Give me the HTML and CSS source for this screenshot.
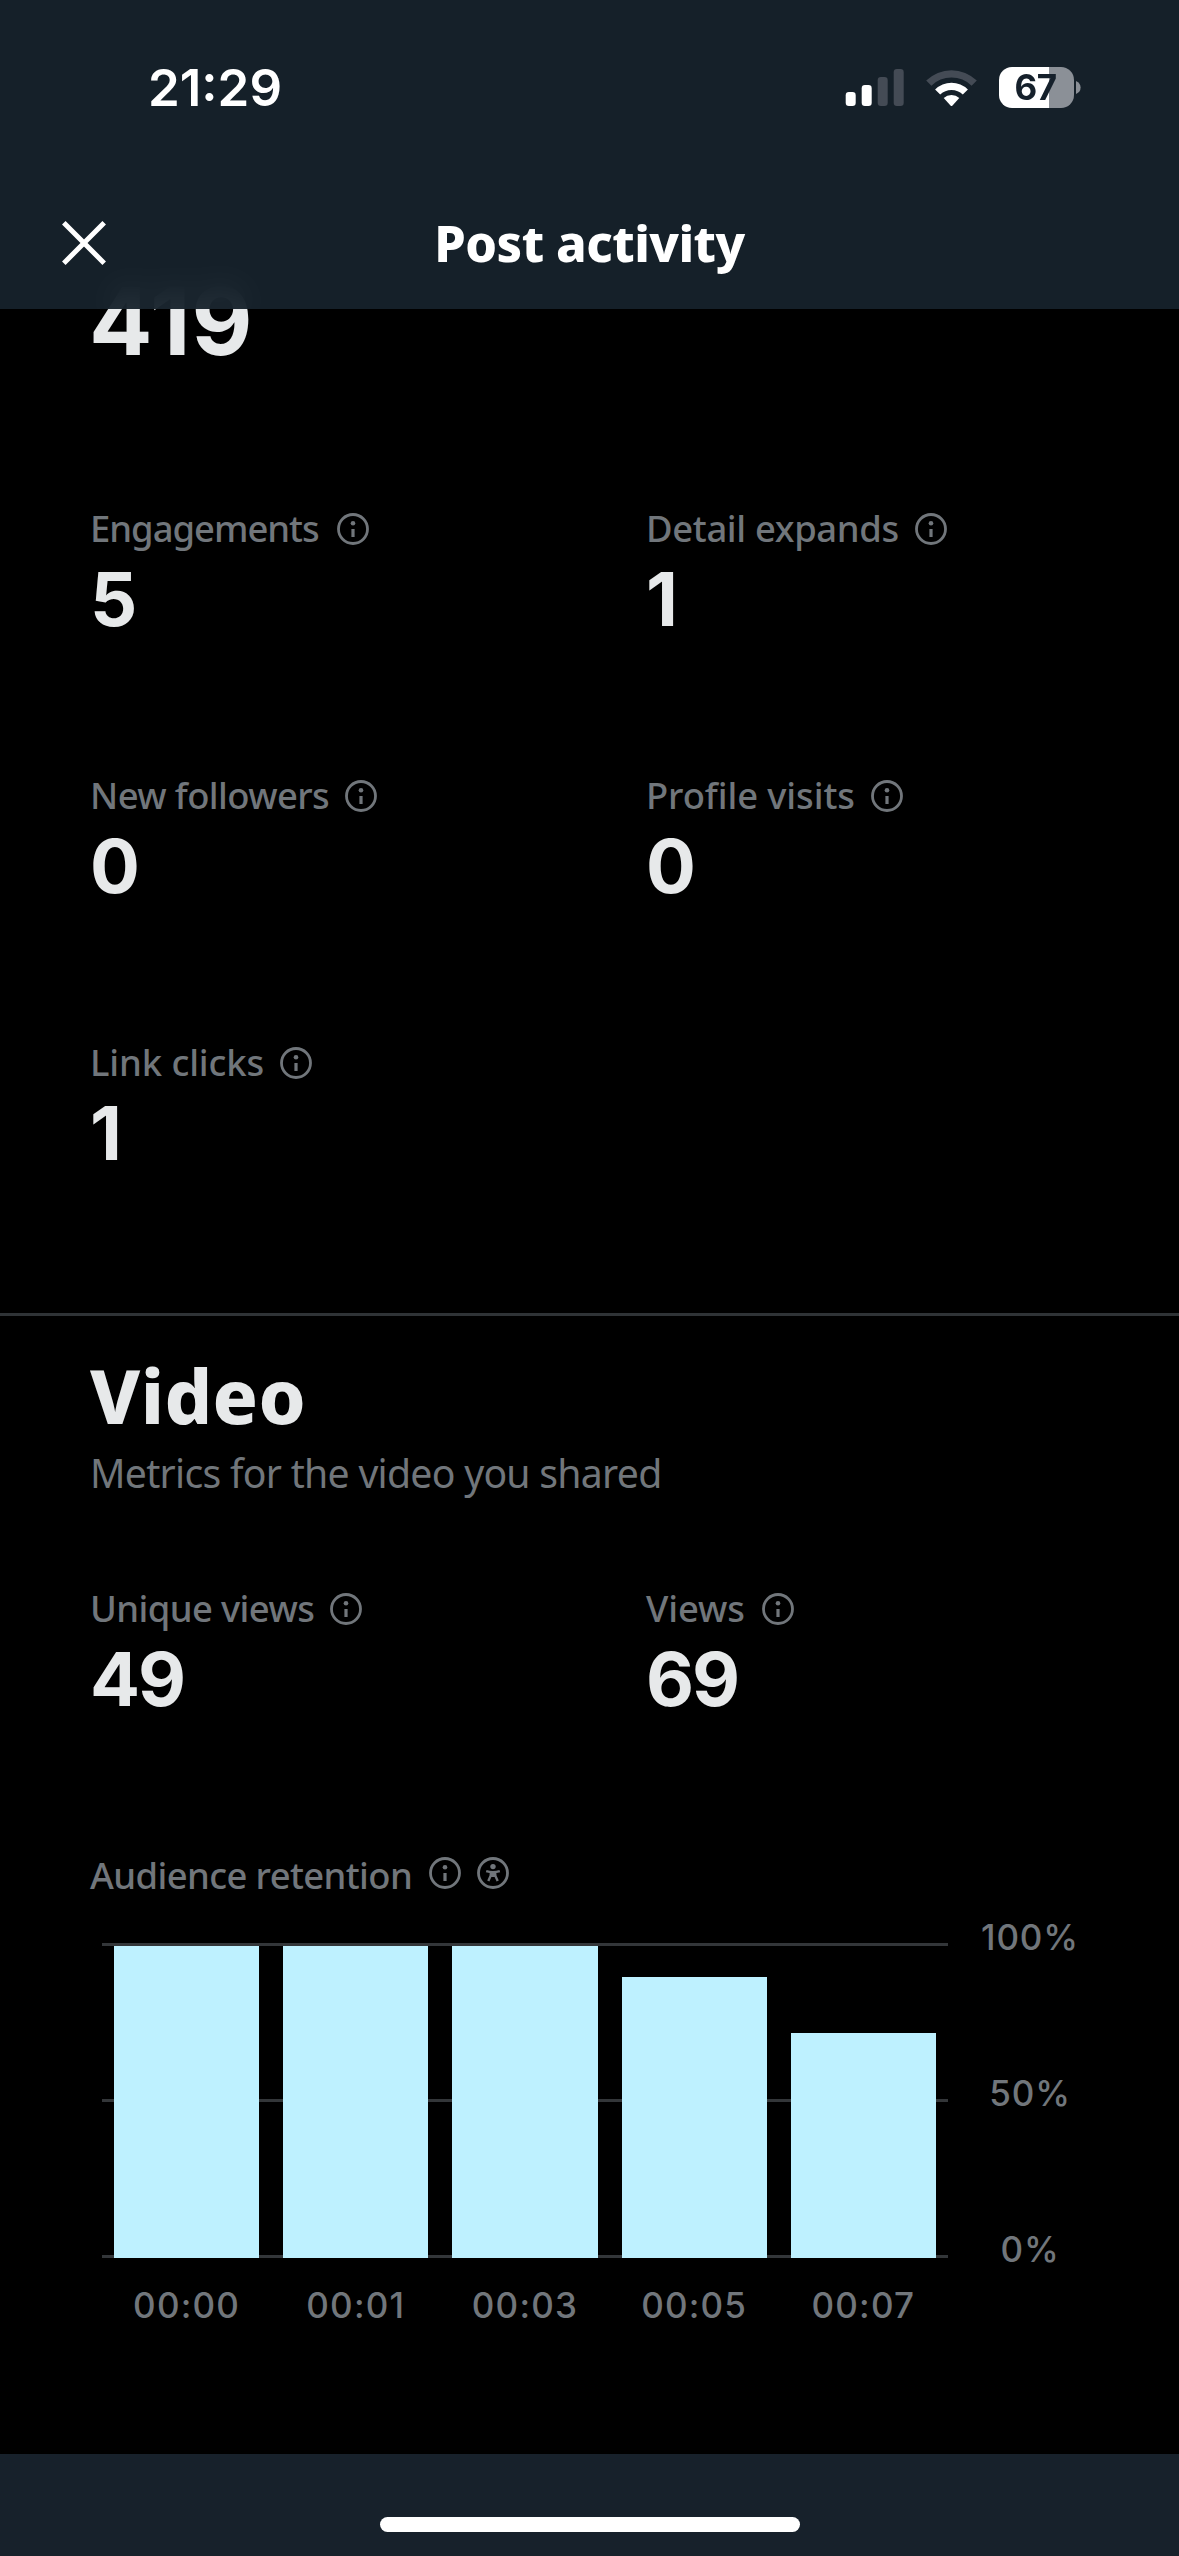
FILE: index.html
```html
<!DOCTYPE html>
<html lang="en">
<head>
<meta charset="utf-8">
<title>Post activity</title>
<link rel="stylesheet" href="styles.css">
</head>
<body>
<svg class="defs" aria-hidden="true">
  <symbol id="info" viewBox="0 0 32 32">
    <circle cx="16" cy="16" r="14.5" fill="none" stroke="currentColor" stroke-width="2.8"/>
    <circle cx="16" cy="10.3" r="2.3" fill="currentColor"/>
    <rect x="14.4" y="16" width="3.2" height="8" fill="currentColor"/>
  </symbol>
  <symbol id="person" viewBox="0 0 32 32">
    <circle cx="16" cy="16" r="14.5" fill="none" stroke="currentColor" stroke-width="2.8"/>
    <circle cx="16" cy="9.6" r="2.7" fill="currentColor"/>
    <path d="M9.2 14.1c4.3 1.3 9.3 1.3 13.6 0M13.8 15v3.6L11.3 24M18.2 15v3.6l2.5 5.4M13 18.8h6" fill="none" stroke="currentColor" stroke-width="2.4"/>
    <path d="M12.9 14.5h6.2v5.2h-6.2z" fill="currentColor"/>
  </symbol>
</svg>

<div class="screen">
  <header class="header">
    <div class="status">
      <span class="time">21:29</span>
      <div class="indicators">
        <svg class="signal" width="59" height="37" viewBox="0 0 59 37">
          <rect x="0.7" y="23" width="10" height="14" rx="3.2" fill="#fff"/>
          <rect x="16.7" y="16" width="10" height="21" rx="3.2" fill="#fff"/>
          <rect x="32.7" y="8" width="10" height="29" rx="3.2" fill="#444b55"/>
          <rect x="48.7" y="0" width="10" height="37" rx="3.2" fill="#444b55"/>
        </svg>
        <svg class="wifi" width="51" height="38" viewBox="0 0 51 38">
          <path d="M.2 11.6a36 36 0 0 1 50.6 0l-5.2 5.1a28.6 28.6 0 0 0-40.2 0z" fill="#444b55"/>
          <path d="M9.1 20.5a23.4 23.4 0 0 1 32.8 0l-5.1 5.1a16.4 16.4 0 0 0-22.6 0z" fill="#fff"/>
          <path d="M17.7 29.1a11.4 11.4 0 0 1 15.6 0l-6.8 7.4q-1 1-2 0z" fill="#fff"/>
        </svg>
        <div class="power">
          <span class="battery">67</span>
          <svg width="5" height="13" viewBox="0 0 5 13"><path d="M0 0q4.6 2 4.6 6.5T0 13z" fill="#8b9097"/></svg>
        </div>
      </div>
    </div>
    <div class="titlebar">
      <svg class="close" width="44" height="44" viewBox="0 0 44 44"><path d="M1.8 1.8l40.4 40.4M42.2 1.8L1.8 42.2" stroke="#fff" stroke-width="5"/></svg>
      <h1 class="title">Post activity</h1>
    </div>
  </header>

  <main class="content">
    <div class="total">419</div>
    <section class="metrics">
      <div class="metric"><div class="label tight">Engagements<svg class="icon"><use href="#info"/></svg></div><div class="value">5</div></div>
      <div class="metric"><div class="label mid">Detail expands<svg class="icon"><use href="#info"/></svg></div><div class="value">1</div></div>
      <div class="metric"><div class="label snug">New followers<svg class="icon"><use href="#info"/></svg></div><div class="value">0</div></div>
      <div class="metric"><div class="label">Profile visits<svg class="icon"><use href="#info"/></svg></div><div class="value">0</div></div>
      <div class="metric"><div class="label">Link clicks<svg class="icon"><use href="#info"/></svg></div><div class="value">1</div></div>
    </section>

    <section class="video">
      <h2 class="heading">Video</h2>
      <p class="sub">Metrics for the video you shared</p>
      <div class="metrics">
        <div class="metric"><div class="label snug">Unique views<svg class="icon"><use href="#info"/></svg></div><div class="value">49</div></div>
        <div class="metric"><div class="label views">Views<svg class="icon"><use href="#info"/></svg></div><div class="value">69</div></div>
      </div>
      <div class="label snug retention">Audience retention<svg class="icon"><use href="#info"/></svg><svg class="icon"><use href="#person"/></svg></div>
      <div class="chart">
        <div class="plot">
          <div class="bar" style="height:312px"></div>
          <div class="bar" style="height:312px"></div>
          <div class="bar" style="height:312px"></div>
          <div class="bar" style="height:281px"></div>
          <div class="bar" style="height:225px"></div>
        </div>
        <div class="y-axis"><span>100%</span><span>50%</span><span>0%</span></div>
        <div class="x-axis"><span>00:00</span><span>00:01</span><span>00:03</span><span>00:05</span><span>00:07</span></div>
      </div>
    </section>
  </main>

  <footer class="footer"><div class="home"></div></footer>
</div>
</body>
</html>
```
FILE: styles.css
```css
* { box-sizing: border-box; }

body {
  margin: 0;
  background: #000;
  font-family: "Noto Sans", "Open Sans", sans-serif;
  color: #e7e9ea;
}

.defs { display: none; }

.screen {
  display: flex;
  flex-direction: column;
  width: 1179px;
  height: 2556px;
  overflow: hidden;
}

.header {
  position: relative;
  z-index: 1;
  flex: none;
  height: 309px;
  background: rgba(23, 34, 44, 0.93);
  backdrop-filter: blur(16px);
  color: #fff;
}

.status {
  display: flex;
  align-items: center;
  justify-content: space-between;
  height: 175px;
  padding: 0 98px 0 148px;
}

.time {
  font: 600 51px/60px Inter, sans-serif;
}

.indicators, .power { display: flex; align-items: center; }
.indicators { gap: 22px; }
.power { gap: 2px; }

.battery {
  width: 75px;
  height: 41px;
  padding-right: 2px;
  border-radius: 13px;
  background: linear-gradient(90deg, #fff 50px, #8b9097 50px);
  color: #15202b;
  font: 700 35px/41px Inter, sans-serif;
  letter-spacing: -0.6px;
  text-align: center;
}

.titlebar {
  display: grid;
  grid-template-columns: 1fr auto 1fr;
  align-items: center;
  height: 134px;
  padding: 0 62px;
}

.close { margin-top: 2px; }

.title {
  margin: 2px 0 0;
  font-size: 50.4px;
  font-weight: 800;
  line-height: 60px;
  letter-spacing: -0.55px;
}

.content { flex: 1; margin-top: -35px; min-height: 0; }

.total {
  padding-left: 89px;
  font: 700 94px/94px Inter, sans-serif;
  letter-spacing: 1px;
}

.metrics {
  display: grid;
  grid-template-columns: 556px 1fr;
  grid-auto-rows: 267px;
}

.content > .metrics { margin-top: 134px; padding-left: 90px; }

.label {
  display: flex;
  align-items: center;
  height: 50px;
  padding-top: 2px;
  color: #71767b;
  font-size: 36.4px;
  font-weight: 500;
  line-height: 50px;
  letter-spacing: -0.1px;
}

.mid { letter-spacing: -0.35px; }
.snug { letter-spacing: -0.6px; }
.tight { letter-spacing: -1px; }

.icon { width: 32px; height: 32px; margin: 2px 0 0 16px; }
.tight .icon { margin-left: 18px; }
.views .icon { margin-left: 17px; }

.value {
  margin-top: 10px;
  font: 700 74px/74px Inter, sans-serif;
  letter-spacing: -2px;
}

.video {
  margin-top: 10px;
  padding: 37px 70px 0 90px;
  border-top: 3px solid #2f3336;
}

.heading {
  margin: 0;
  font-size: 75px;
  font-weight: 800;
  line-height: 84px;
  letter-spacing: 0.4px;
}

.sub {
  margin: 11px 0 84px;
  color: #71767b;
  font-size: 39.2px;
  line-height: 50px;
  letter-spacing: -0.73px;
}

.retention .icon { margin: -4px 0 0 17px; }
.retention .icon + .icon { margin-left: 16px; }

.chart {
  display: grid;
  grid-template-columns: 846px 161px;
  margin: 44px 0 0 12px;
  color: #71767b;
  font: 500 35px/50px Inter, sans-serif;
}

/* Gridlines at 100%, 50% and 0% */
.plot {
  display: grid;
  grid-template-columns: repeat(5, 1fr);
  align-items: end;
  height: 315px;
  background: repeating-linear-gradient(#333639 0 3px, transparent 3px 156px);
}

.bar { margin: 0 12px; background: #bef1ff; }

.y-axis {
  display: flex;
  flex-direction: column;
  gap: 106px;
  height: 315px;
  margin-top: -31px;
  padding-left: 3px;
  text-align: center;
  letter-spacing: 0.9px;
}

.x-axis {
  display: grid;
  grid-template-columns: repeat(5, 1fr);
  margin-top: 22px;
  text-align: center;
  letter-spacing: 1.2px;
}

.footer {
  display: flex;
  flex: none;
  justify-content: center;
  height: 102px;
  padding-top: 63px;
  background: #17212b;
}

.home { width: 420px; height: 15px; border-radius: 8px; background: #fff; }
```
